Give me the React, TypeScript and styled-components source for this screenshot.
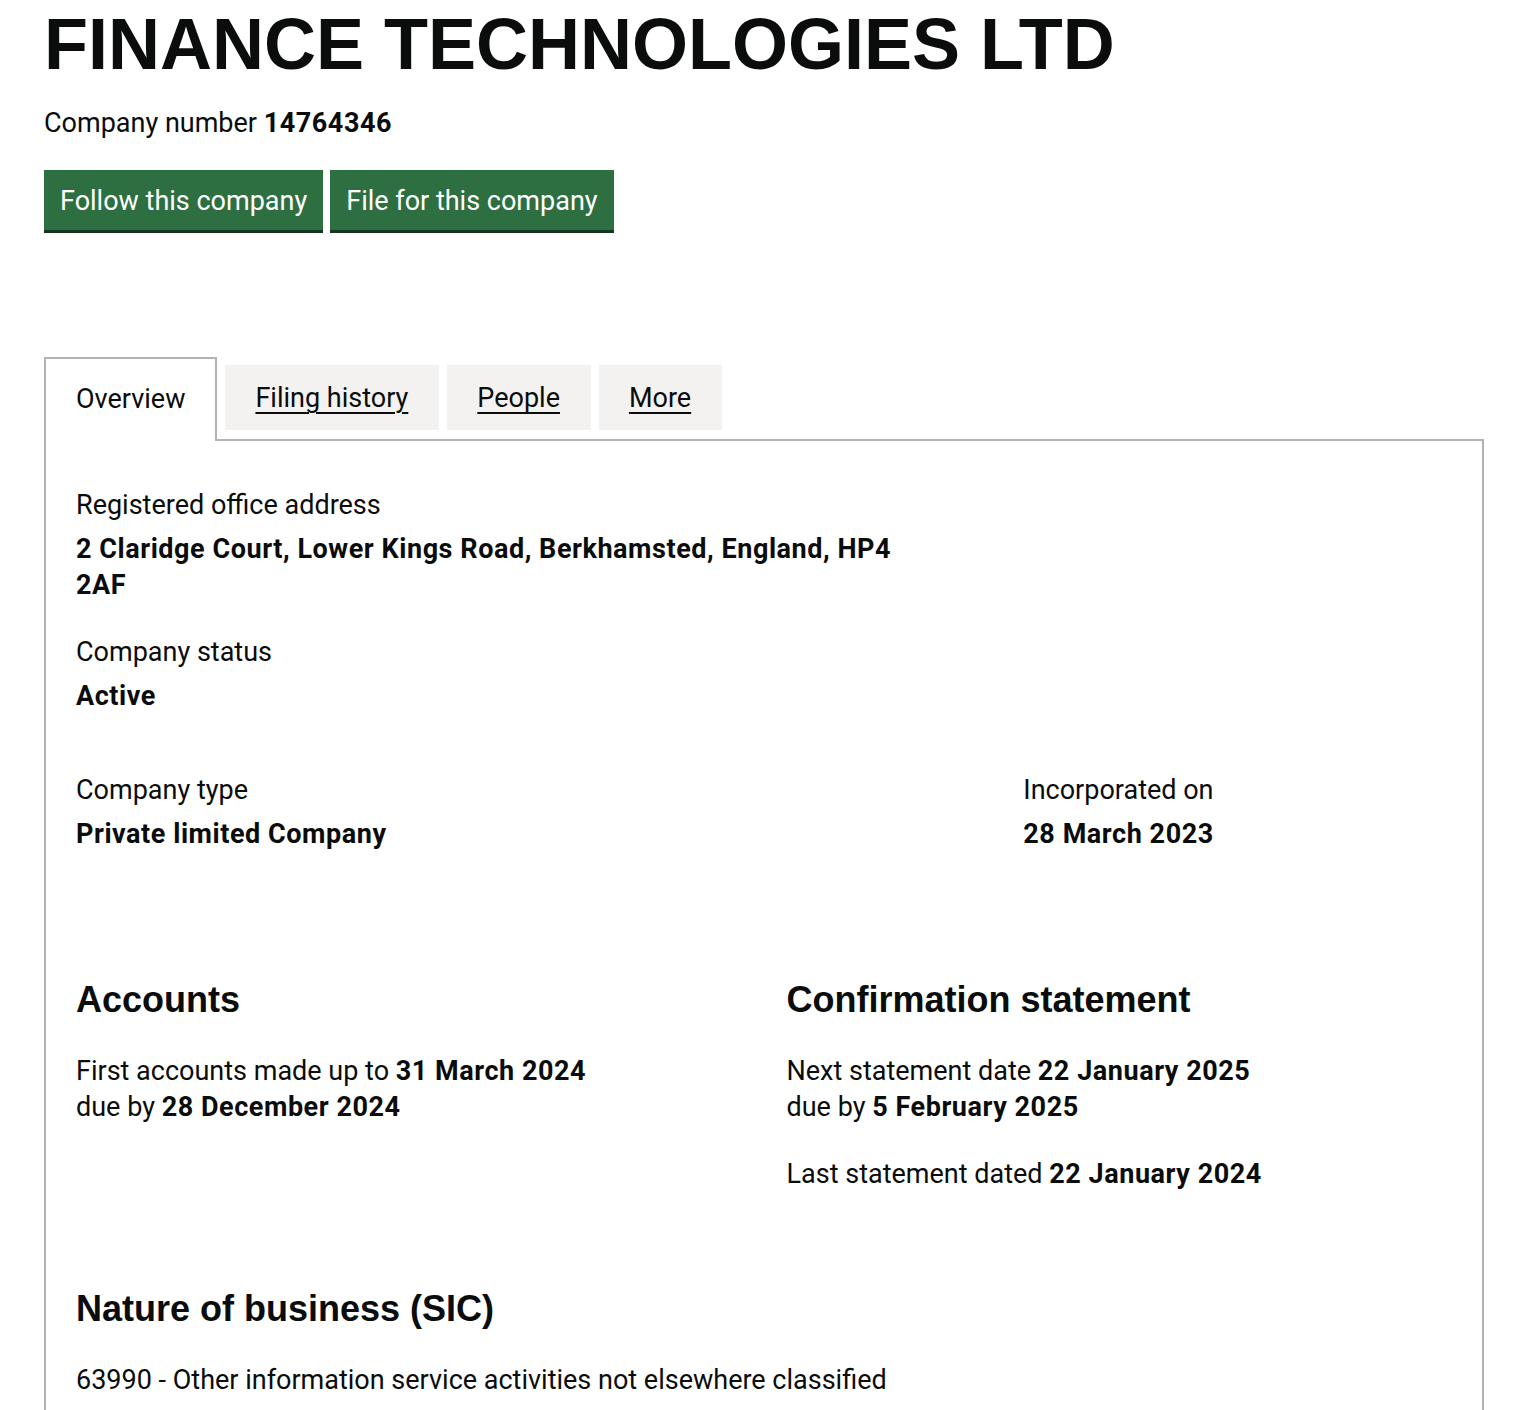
import React from "react";
import styled, { createGlobalStyle } from "styled-components";

const GlobalStyle = createGlobalStyle`
  html, body {
    margin: 0;
    padding: 0;
    background: #ffffff;
  }
  body {
    font-family: Roboto, "Noto Sans", sans-serif;
    font-size: 27px;
    line-height: 36px;
    color: #0b0c0c;
  }
`;

const Page = styled.main`
  padding: 0 30px 0 44px;
`;

const Title = styled.h1`
  margin: 0;
  padding-top: 4px;
  font-family: "Liberation Sans", Arial, sans-serif;
  font-weight: 700;
  font-size: 72px;
  line-height: 80px;
`;

const CompanyNumber = styled.p`
  margin: 21px 0 0;
`;

const Strong = styled.strong`
  font-weight: 700;
  letter-spacing: 0.55px;
`;

const Actions = styled.div`
  display: flex;
  gap: 7px;
  margin-top: 29px;
`;

const Button = styled.a`
  display: inline-block;
  padding: 13px 16px 11px;
  background: #2e6f42;
  color: #ffffff;
  text-decoration: none;
  box-shadow: 0 3px 0 #133620;
  cursor: pointer;
`;

const TabList = styled.ul`
  display: flex;
  align-items: flex-start;
  gap: 8px;
  margin: 127px 0 0;
  padding: 0;
  list-style: none;
`;

const Tab = styled.li<{ $selected?: boolean }>`
  position: relative;
  z-index: ${({ $selected }) => ($selected ? 1 : 0)};
  margin: ${({ $selected }) => ($selected ? "0 0 -2px" : "8px 0 0")};
  padding: ${({ $selected }) => ($selected ? "22px 30px 24px" : "15px 31px 14px 30px")};
  background: ${({ $selected }) => ($selected ? "#ffffff" : "#f3f2f1")};
  border: ${({ $selected }) => ($selected ? "2px solid #b1b4b6" : "none")};
  border-bottom: none;
`;

const TabLink = styled.a<{ $selected?: boolean }>`
  color: #0b0c0c;
  text-decoration: ${({ $selected }) => ($selected ? "none" : "underline")};
  text-decoration-thickness: 2px;
  text-underline-offset: 5px;
`;

const Panel = styled.section`
  border: 2px solid #b1b4b6;
  padding: 46px 30px 40px;
`;

const Field = styled.dl<{ $space?: number }>`
  margin: 0 0 ${({ $space }) => $space ?? 31}px;
`;

const Label = styled.dt`
  margin: 0;
`;

const Value = styled.dd<{ $maxWidth?: number }>`
  margin: 8px 0 0;
  font-weight: 700;
  letter-spacing: 0.55px;
  max-width: ${({ $maxWidth }) => ($maxWidth ? `${$maxWidth}px` : "none")};
`;

const Row = styled.div<{ $top?: number }>`
  display: flex;
  margin: ${({ $top }) => $top ?? 0}px -22.5px 0;
`;

const Column = styled.div<{ $width: number }>`
  box-sizing: border-box;
  width: ${({ $width }) => $width}%;
  padding: 0 22.5px;
`;

const Heading = styled.h2<{ $top?: number }>`
  margin: ${({ $top }) => $top ?? 0}px 0 33px;
  font-family: "Liberation Sans", Arial, sans-serif;
  font-weight: 700;
  font-size: 36px;
  line-height: 40px;
`;

const Text = styled.p`
  margin: 31px 0 0;
`;

const tabs = ["Overview", "Filing history", "People", "More"];

export default function App() {
  return (
    <>
      <GlobalStyle />
      <Page>
        <Title>FINANCE TECHNOLOGIES LTD</Title>
        <CompanyNumber>
          Company number <Strong>14764346</Strong>
        </CompanyNumber>
        <Actions>
          <Button>Follow this company</Button>
          <Button>File for this company</Button>
        </Actions>

        <TabList>
          {tabs.map((t, i) => (
            <Tab key={t} $selected={i === 0}>
              <TabLink $selected={i === 0}>{t}</TabLink>
            </Tab>
          ))}
        </TabList>

        <Panel>
          <Field>
            <Label>Registered office address</Label>
            <Value $maxWidth={845}>
              2 Claridge Court, Lower Kings Road, Berkhamsted, England, HP4 2AF
            </Value>
          </Field>
          <Field $space={58}>
            <Label>Company status</Label>
            <Value>Active</Value>
          </Field>

          <Row>
            <Column $width={66.6667}>
              <Field $space={0}>
                <Label>Company type</Label>
                <Value>Private limited Company</Value>
              </Field>
            </Column>
            <Column $width={33.3333}>
              <Field $space={0}>
                <Label>Incorporated on</Label>
                <Value>28 March 2023</Value>
              </Field>
            </Column>
          </Row>

          <Row $top={128}>
            <Column $width={50}>
              <Heading>Accounts</Heading>
              <Text>
                First accounts made up to <Strong>31 March 2024</Strong>
                <br />
                due by <Strong>28 December 2024</Strong>
              </Text>
            </Column>
            <Column $width={50}>
              <Heading>Confirmation statement</Heading>
              <Text>
                Next statement date <Strong>22 January 2025</Strong>
                <br />
                due by <Strong>5 February 2025</Strong>
              </Text>
              <Text>
                Last statement dated <Strong>22 January 2024</Strong>
              </Text>
            </Column>
          </Row>

          <Heading $top={97}>Nature of business (SIC)</Heading>
          <Text>
            63990 - Other information service activities not elsewhere
            classified
          </Text>
        </Panel>
      </Page>
    </>
  );
}
